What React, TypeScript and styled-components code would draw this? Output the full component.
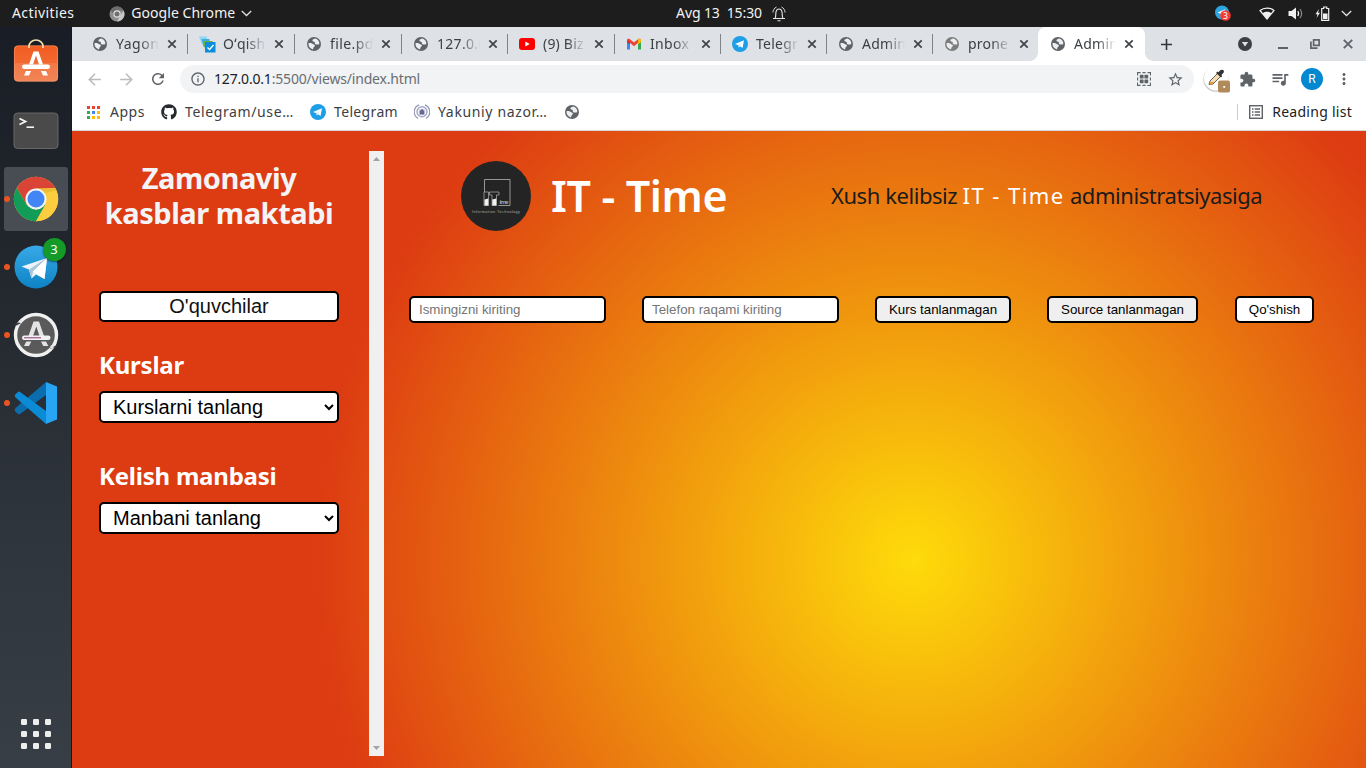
import React from 'react';
import styled, { createGlobalStyle } from 'styled-components';
import {
  MdArrowBack, MdArrowForward, MdRefresh, MdInfoOutline, MdStarBorder,
  MdExtension, MdQueueMusic, MdMoreVert, MdAdd,
} from 'react-icons/md';
import { FaGithub } from 'react-icons/fa';

const Global = createGlobalStyle`
  * { box-sizing: border-box; }
  body {
    margin: 0;
    overflow: hidden;
    font-family: 'Noto Sans', 'Open Sans', sans-serif;
    font-size: 14px;
  }
`;

const Desktop = styled.div`
  width: 1366px;
  height: 768px;
  display: flex;
  flex-direction: column;
`;

/* ---------- top panel ---------- */

const Panel = styled.header`
  height: 27px;
  flex: none;
  display: grid;
  grid-template-columns: 1fr auto 1fr;
  align-items: center;
  background: #1d1d1d;
  color: #f2f2f2;
  svg { display: block; flex: none; }
`;

const PanelLeft = styled.div`
  display: flex;
  align-items: center;
  padding-left: 12px;
`;

const PanelCenter = styled.div`
  display: flex;
  align-items: center;
  gap: 10px;
  padding-left: 96px;
`;

const PanelRight = styled.div`
  display: flex;
  align-items: center;
  justify-content: flex-end;
  padding-right: 14px;
`;

const PanelText = styled.span<{ $ls?: number }>`
  line-height: 26px;
  padding-bottom: 1px;
  white-space: pre;
  letter-spacing: ${(p) => p.$ls ?? 0}px;
`;

const AppMenu = styled.div`
  display: flex;
  align-items: center;
  gap: 6px;
  margin-left: 35px;
`;

const TrayItem = styled.span<{ $gap: number }>`
  margin-left: ${(p) => p.$gap}px;
`;

/* ---------- dock ---------- */

const Workspace = styled.div`
  flex: 1;
  min-height: 0;
  display: flex;
`;

const Dock = styled.nav`
  width: 72px;
  flex: none;
  display: flex;
  flex-direction: column;
  align-items: center;
  gap: 4px;
  padding: 4px 0 2px;
  border-right: 1px solid #16181c;
  background: linear-gradient(180deg, #191e26 0%, #22272e 32%, #2d333a 62%, #383e45 100%);
`;

const DockItem = styled.div<{ $active?: boolean; $running?: boolean; $last?: boolean; $raise?: number }>`
  position: relative;
  width: 64px;
  height: 64px;
  flex: none;
  display: flex;
  align-items: center;
  justify-content: center;
  border-radius: 3px;
  padding-bottom: ${(p) => p.$raise ?? 0}px;
  margin-top: ${(p) => (p.$last ? 'auto' : 0)};
  background: ${(p) => (p.$active ? '#484c53' : 'transparent')};
  &::before {
    content: '';
    display: ${(p) => (p.$running ? 'block' : 'none')};
    position: absolute;
    left: 0;
    top: 29px;
    width: 6px;
    height: 6px;
    border-radius: 50%;
    background: #e95420;
  }
`;

const DockBadge = styled.span`
  position: absolute;
  right: 2px;
  top: 3px;
  width: 23px;
  height: 23px;
  border-radius: 50%;
  background: #149a26;
  box-shadow: 0 1px 2px rgba(0, 0, 0, 0.5);
  color: #fff;
  font-size: 13px;
  line-height: 23px;
  text-align: center;
`;

/* ---------- browser chrome ---------- */

const Browser = styled.section`
  flex: 1;
  min-width: 0;
  display: flex;
  flex-direction: column;
  background: #fff;
  color: #3c4043;
`;

const TabStrip = styled.div`
  height: 34px;
  flex: none;
  display: flex;
  align-items: center;
  padding-left: 9px;
  background: #dee1e6;
`;

const Tab = styled.div<{ $w: number; $active?: boolean; $divider?: boolean }>`
  position: relative;
  width: ${(p) => p.$w}px;
  height: 34px;
  flex: none;
  display: flex;
  align-items: center;
  padding-left: ${(p) => (p.$active ? 12 : 11)}px;
  background: ${(p) => (p.$active ? '#fff' : 'transparent')};
  border-radius: 8px 8px 0 0;
  &::after {
    content: '';
    display: ${(p) => (p.$divider ? 'block' : 'none')};
    position: absolute;
    right: 0;
    top: 7px;
    width: 1px;
    height: 20px;
    background: #808387;
  }
  svg { display: block; flex: none; }
`;

const TabFoot = styled.i<{ $side: 'left' | 'right' }>`
  position: absolute;
  bottom: 0;
  ${(p) => p.$side}: -8px;
  width: 8px;
  height: 8px;
  background: radial-gradient(circle at ${(p) => (p.$side === 'left' ? '0 0' : '100% 0')}, transparent 7.5px, #fff 8px);
`;

const TabTitle = styled.span<{ $ls?: number; $w?: number }>`
  width: ${(p) => p.$w ?? 43}px;
  margin-left: 8px;
  margin-right: 8px;
  white-space: nowrap;
  line-height: 20px;
  letter-spacing: ${(p) => p.$ls ?? 0.25}px;
  mask-image: linear-gradient(90deg, #000 55%, transparent 100%);
`;

const FavBox = styled.span`
  width: 16px;
  height: 16px;
  flex: none;
  display: flex;
  align-items: center;
  justify-content: center;
`;

const NewTab = styled.div`
  margin-left: 12px;
  display: flex;
  color: #33363a;
`;

const WindowButtons = styled.div`
  margin-left: auto;
  padding-right: 13px;
  display: grid;
  grid-template-columns: 40px 32px 33px 10px;
  align-items: center;
  svg { display: block; }
`;

const Toolbar = styled.div`
  height: 36px;
  flex: none;
  display: flex;
  align-items: center;
  padding: 0 12px 0 13px;
  color: #5f6368;
  svg { display: block; flex: none; }
`;

const NavButtons = styled.div`
  display: flex;
  gap: 13px;
  margin-right: 13px;
`;

const Omnibox = styled.div`
  width: 1014px;
  height: 28px;
  display: flex;
  align-items: center;
  padding: 0 10px;
  border-radius: 14px;
  background: #f1f3f4;
`;

const Url = styled.span`
  margin-left: 8px;
  flex: 1;
  padding-bottom: 1px;
  letter-spacing: -0.18px;
  color: #6a6e73;
  b { font-weight: 400; color: #202124; }
`;

const OmniActions = styled.div`
  display: flex;
  align-items: center;
  gap: 16px;
`;

const Extensions = styled.div`
  flex: 1;
  display: grid;
  grid-template-columns: 36px 31px 31px 34px 18px;
  align-items: center;
  margin-left: 9px;
`;

const Avatar = styled.span`
  width: 22px;
  height: 22px;
  border-radius: 50%;
  background: #0288d1;
  color: #fff;
  font: 12px/22px Roboto, sans-serif;
  text-align: center;
`;

const Bookmarks = styled.div`
  height: 34px;
  flex: none;
  display: flex;
  align-items: center;
  padding: 0 14px 4px 15px;
  border-bottom: 1px solid #d7d8da;
  svg { display: block; flex: none; }
`;

const Bookmark = styled.div<{ $w: number; $ls: number; $gap?: number }>`
  width: ${(p) => p.$w}px;
  display: flex;
  align-items: center;
  gap: ${(p) => p.$gap ?? 8}px;
  white-space: nowrap;
  letter-spacing: ${(p) => p.$ls}px;
`;

const ReadingList = styled.div`
  margin-left: auto;
  display: flex;
  align-items: center;
  gap: 9px;
  padding-left: 11px;
  border-left: 1px solid #c9cbce;
  height: 16px;
  color: #202124;
  letter-spacing: 0.27px;
`;

/* ---------- web page ---------- */

const Page = styled.main`
  flex: 1;
  min-height: 0;
  display: flex;
  padding: 20px 0 12px;
  background: radial-gradient(circle at 65% 67.4%, #fedb0a 0px, #ee8d0e 290px, #dd3b12 598px);
`;

const Sidebar = styled.aside`
  width: 297px;
  flex: none;
  padding: 9px 30px 0 27px;
  display: flex;
  flex-direction: column;
`;

const SchoolName = styled.h2`
  margin: 0 0 61px;
  height: 70px;
  font-size: 29px;
  line-height: 35px;
  font-weight: 700;
  letter-spacing: -0.45px;
  text-align: center;
  color: #f4f4f6;
`;

const controlBox = `
  border: 2px solid #000;
  border-radius: 5px;
  background: #fff;
  color: #000;
  font-family: 'Liberation Sans', Arial, sans-serif;
`;

const StudentsButton = styled.button`
  ${controlBox}
  height: 31px;
  padding: 0;
  font-size: 20px;
  color: #111;
`;

const GroupTitle = styled.h3<{ $top: number }>`
  margin: ${(p) => p.$top}px 0 11px;
  height: 30px;
  font-size: 24px;
  line-height: 30px;
  font-weight: 700;
  letter-spacing: -0.22px;
  color: #fff;
`;

const Select = styled.select`
  ${controlBox}
  width: 240px;
  height: 32px;
  padding: 0 0 0 8px;
  font-size: 20px;
`;

const ScrollTrack = styled.div`
  width: 15px;
  flex: none;
  display: flex;
  flex-direction: column;
  justify-content: space-between;
  align-items: center;
  padding: 6px 0;
  background: #f0f0f0;
  svg { display: block; }
`;

const Content = styled.div`
  flex: 1;
  padding: 10px 52px 0 25px;
`;

const Banner = styled.div`
  height: 70px;
  display: flex;
  align-items: center;
  padding-left: 52px;
`;

const Brand = styled.h1`
  width: 280px;
  margin: 0 0 0 20px;
  font-size: 43px;
  font-weight: 600;
  line-height: 70px;
  letter-spacing: -0.36px;
  white-space: nowrap;
  color: #fff;
`;

const Welcome = styled.p`
  margin: 0;
  padding-bottom: 2px;
  font-size: 22px;
  letter-spacing: -0.44px;
  white-space: nowrap;
  color: #1b1b1b;
  span { color: #fff; letter-spacing: 1.45px; }
`;

const Form = styled.form`
  display: flex;
  gap: 36px;
  margin-top: 65px;
`;

const Field = styled.input`
  ${controlBox}
  width: 197px;
  height: 27px;
  padding: 0 8px;
  font-size: 13.333px;
  &::placeholder { color: #757575; }
`;

const FormButton = styled.button<{ $w: number; $gray?: boolean }>`
  ${controlBox}
  width: ${(p) => p.$w}px;
  height: 27px;
  padding: 0;
  font-size: 13.333px;
  background: ${(p) => (p.$gray ? '#efefef' : '#fff')};
  &:last-child { margin-left: 1px; }
`;

/* ---------- drawings ---------- */

const Globe = ({ color = '#5f6368' }: { color?: string }) => (
  <svg width="14" height="14" viewBox="0 0 14 14">
    <circle cx="7" cy="7" r="7" fill={color} />
    <path d="M8.6 1.6C7 2 5.2 2.6 5.4 3.7c.2 1 1.6.6 2.2 1.3.6.8-.2 1.6.8 2.2 1 .6 2.3.2 3.9.1A5.6 5.6 0 0 0 8.6 1.6z" fill="#eceef1" />
    <path d="M1.5 6.2c1.3-.2 3.2-.2 4 .6.7.7 2 .7 2.4 1.6.3.9-1 1.3-1.4 2.1-.3.7-.2 1.4-.5 1.9C3.3 11.7 1.3 9.3 1.5 6.2z" fill="#eceef1" />
  </svg>
);

const TelegramIcon = () => (
  <svg width="16" height="16" viewBox="0 0 16 16">
    <circle cx="8" cy="8" r="8" fill="#1d9ee6" />
    <path d="M3 7.9l9-3.6-1.5 7.7-2.4-1.7-1.3 1.3-.3-2.3z" fill="#fff" />
    <path d="M6.5 9.3L10.5 6 7.5 9.7l-.7 1.9z" fill="#b9dcf0" />
  </svg>
);

const YouTubeIcon = () => (
  <svg width="16" height="12" viewBox="0 0 16 12">
    <rect width="16" height="12" rx="3" fill="#f00" />
    <path d="M6.3 3.4v5.2L10.7 6z" fill="#fff" />
  </svg>
);

const GmailIcon = () => (
  <svg width="16" height="12" viewBox="0 0 16 12">
    <path d="M1 2v9.5h3V5z" fill="#4285f4" />
    <path d="M12 5v6.5h3V2z" fill="#34a853" />
    <path d="M1 2.2V4l3 2.3V2.5z" fill="#c5221f" />
    <path d="M1 2.2C1 .7 2.6.3 3.6 1L8 4.4 12.4 1C13.4.3 15 .7 15 2.2L8 8.2z" fill="#ea4335" />
    <path d="M12 3v3.3L15 4V2.2C15 .8 13.4.3 12.4 1z" fill="#fbbc04" />
  </svg>
);

const ChecklistIcon = () => (
  <svg width="18" height="18" viewBox="0 0 18 18">
    <path d="M1 1.500h8v3h-2v4H3.500z" fill="#8fd6f2" />
    <path d="M3.500 4h8v3h-2v5H5.500z" fill="#3bafda" />
    <path d="M5.500 6h9v3h-4v5H7z" fill="#6fae3c" />
    <rect x="7" y="7" width="10.500" height="10.500" fill="#0a8ddb" />
    <path d="M9.500 12.500l2 2 4-4.500" stroke="#fff" strokeWidth="1.400" fill="none" />
  </svg>
);

const TabClose = () => (
  <svg width="10" height="10" viewBox="0 0 10 10">
    <path d="M1.3 1.3l7.4 7.4M8.7 1.3L1.3 8.7" stroke="#3f4246" strokeWidth="1.7" />
  </svg>
);

const ChromeGray = () => (
  <svg width="16" height="16" viewBox="0 0 16 16">
    <circle cx="8" cy="8" r="7.5" fill="#8e8e8e" />
    <path d="M8 .5A7.5 7.5 0 0 0 1.500 4.300L5 9l3-4.500h6.600A7.500 7.500 0 0 0 8 .5z" fill="#6d6d6d" />
    <path d="M8 15.500l3.400-6 3.200-5a7.500 7.500 0 0 1-6.600 11z" fill="#c8c8c8" />
    <circle cx="8" cy="8" r="3.700" fill="#dedede" />
    <circle cx="8" cy="8" r="2.500" fill="#6f6f6f" />
  </svg>
);

const Chevron = () => (
  <svg width="11" height="7" viewBox="0 0 11 7">
    <path d="M.8 1l4.7 4.500L10.200 1" stroke="#e0e0e0" strokeWidth="1.300" fill="none" />
  </svg>
);

const Bell = () => (
  <svg width="14" height="16" viewBox="0 0 14 16" fill="none" stroke="#e8e8e8" strokeWidth="1.100">
    <path d="M1 12.500h12M3 12.500c1-1.500.7-4 .9-6C4.200 4.200 5.300 3 7 3s2.800 1.200 3.100 3.500c.2 2-.1 4.500.9 6M5.500 14.800h3" />
    <path d="M1 6.500C1 4 2.300 2 4.500 1M13 6.500C13 4 11.700 2 9.500 1" strokeWidth=".9" />
  </svg>
);

const TrayTelegram = () => (
  <svg width="16" height="17" viewBox="0 0 16 17">
    <circle cx="7" cy="7.500" r="7" fill="#2ca5e0" />
    <path d="M2.500 7.500l8-3.200-1.500 6z" fill="#fff" />
    <circle cx="10.500" cy="10.500" r="5.300" fill="#f23c34" />
    <text x="10.500" y="13.500" fontSize="8.500" textAnchor="middle" fill="#fff">3</text>
  </svg>
);

const Wifi = () => (
  <svg width="16" height="13" viewBox="0 0 16 13">
    <path d="M1 3.500C5 .2 11 .2 15 3.500L8 12z" fill="none" stroke="#f0f0f0" strokeWidth="1.200" strokeLinejoin="round" />
    <path d="M3.700 6.200c2.500-1.800 6.100-1.800 8.600 0L8 12z" fill="#f0f0f0" />
  </svg>
);

const Speaker = () => (
  <svg width="15" height="13" viewBox="0 0 15 13">
    <path d="M.5 4h3L8 .5v12L3.500 9h-3z" fill="#f0f0f0" />
    <path d="M9.800 4c1 1.500 1 3.500 0 5" stroke="#f0f0f0" strokeWidth="1.200" fill="none" />
    <path d="M12 2c2 2.700 2 6.300 0 9" stroke="#888" strokeWidth="1.200" fill="none" />
  </svg>
);

const Battery = () => (
  <svg width="15" height="15" viewBox="0 0 15 15">
    <path d="M4 3L.5 8.200h2L1.500 12 5 6.800H3z" fill="#f0f0f0" />
    <path d="M6.700 2.500h2V1h3v1.500h2v11.800h-7z" fill="none" stroke="#f0f0f0" strokeWidth="1.200" />
    <rect x="8" y="7.500" width="4.500" height="5.500" fill="#f0f0f0" />
  </svg>
);

const SoftwareIcon = () => (
  <svg width="46" height="46" viewBox="0 0 46 46">
    <defs>
      <linearGradient id="bag" x1="0" y1="0" x2="0" y2="1">
        <stop offset="0" stopColor="#f25c20" /><stop offset="1" stopColor="#f07744" />
      </linearGradient>
    </defs>
    <rect x="1" y="8.500" width="44" height="36" rx="4" fill="url(#bag)" />
    <rect x="1" y="26" width="44" height="18.500" rx="3" fill="#fff" opacity=".1" />
    <rect x="1.400" y="8.900" width="43.200" height="35.200" rx="4" fill="none" stroke="#f8a17c" strokeWidth=".7" opacity=".7" />
    <path d="M16 11V9.500a7 6.500 0 0 1 14 0V11" fill="none" stroke="#f6dfa8" strokeWidth="1.700" />
    <path d="M20.500 14.500h5l4.500 13h-4L23 18.500 20 27.500h-4z" fill="#fff" />
    <rect x="9" y="27.500" width="28" height="4.600" rx="2.300" fill="#fff" />
    <path d="M13 34h5l-2 4.500h-5zM28 34h5l2 4.500h-5z" fill="#fff" />
  </svg>
);

const TerminalIcon = () => (
  <svg width="46" height="38" viewBox="0 0 46 38">
    <rect x="1" y="1" width="44" height="35.500" rx="3.500" fill="#4a4a4a" stroke="#6c6c6c" strokeWidth=".9" />
    <path d="M6.500 6.500l6 3-6 3" stroke="#f5f5f5" strokeWidth="1.800" fill="none" />
    <path d="M13.500 15.200h7.500" stroke="#f5f5f5" strokeWidth="1.600" />
  </svg>
);

const ChromeIcon = () => (
  <svg width="46" height="46" viewBox="0 0 46 46">
    <circle cx="23" cy="23" r="22.200" fill="#fcc934" />
    <path d="M3.800 11.900A22.200 22.200 0 0 1 42.200 11.900L23 12.500 13.400 28.500z" fill="#d94437" />
    <path d="M3.800 11.900A22.200 22.200 0 0 0 23 45.200L32.500 28.500 23 34 13.400 28.500z" fill="#119c58" />
    <path d="M42.200 11.900A22.200 22.200 0 0 1 23 45.200L32.600 28.500 32 13z" fill="#fdcd3f" />
    <path d="M23 12.500h19.500a22 22 0 0 1 .8 2L31 17z" fill="#e2b22e" opacity=".6" />
    <circle cx="23" cy="23" r="10.600" fill="#f1f3f4" />
    <circle cx="23" cy="23" r="8.500" fill="#4285f4" />
  </svg>
);

const DockTelegram = () => (
  <svg width="44" height="44" viewBox="0 0 44 44">
    <defs>
      <linearGradient id="tg" x1="0" y1="0" x2="0" y2="1">
        <stop offset="0" stopColor="#38a9e8" /><stop offset="1" stopColor="#0d83c4" />
      </linearGradient>
    </defs>
    <circle cx="22" cy="22" r="21.500" fill="url(#tg)" />
    <path d="M7.500 21.500L33 13 30.500 34 22 29.500 17.500 33.500 15 24.500z" fill="#e9f2f8" />
    <path d="M15 24.500L33 13 19 26.500 17.500 33.500z" fill="#a9c6d8" />
    <path d="M19 26.500L33 13 30.500 34z" fill="#fff" />
  </svg>
);

const UpdaterIcon = () => (
  <svg width="46" height="46" viewBox="0 0 46 46">
    <circle cx="23" cy="23" r="20.500" fill="#5a5a5a" stroke="#f0f0f0" strokeWidth="3.400" />
    <path d="M1.500 13.500l6-3M37.500 36l6-1.500" stroke="#3b3f45" strokeWidth="1.800" />
    <circle cx="7.500" cy="9.500" r="1.800" fill="#e4e4e4" />
    <circle cx="39" cy="35" r="1.800" fill="#e4e4e4" />
    <path d="M20.500 9.500h5.500l5 14.500h-4.500l-3.200-9.500L20 24h-4.500z" fill="#e4e4e4" />
    <rect x="9" y="23.500" width="28.500" height="4.400" rx="2.200" fill="#f2f2f2" />
    <path d="M11 25.800h17" stroke="#8b3a78" strokeWidth="1" />
    <path d="M13.300 29.500h5L16 34h-5zM28 29.500h5l2.300 4.500h-5z" fill="#e4e4e4" />
  </svg>
);

const CodeIcon = () => (
  <svg width="44" height="44" viewBox="0 0 44 44">
    <path d="M1.500 27L32 1v13L6 33q-1 .8-2 0L1.200 30.500q-1.200-1.500.3-3.500z" fill="#0b6cae" />
    <path d="M1.500 16.500q-1.500-1.500-.3-3L4 11q1-.8 2 0L32 30v13z" fill="#0b8ad6" />
    <path d="M32 1L43 5.500v33L32 43z" fill="#28a5f3" />
  </svg>
);

const GridIcon = () => (
  <svg width="30" height="30" viewBox="0 0 30 30" fill="#eeeeec">
    {[0, 12, 24].map((y) => [0, 12, 24].map((x) => (
      <rect key={`${x}-${y}`} x={x} y={y} width="6" height="6" rx="1.200" />
    )))}
  </svg>
);

const AppsIcon = () => {
  const colors = ['#ea4335', '#ea4335', '#ea4335', '#34a853', '#4285f4', '#fbbc04', '#34a853', '#fbbc04', '#fbbc04'];
  return (
    <svg width="14" height="14" viewBox="0 0 14 14">
      {colors.map((c, i) => (
        <rect key={i} x={(i % 3) * 5} y={Math.floor(i / 3) * 5 + 1} width="3" height="3" fill={c} />
      ))}
    </svg>
  );
};

const SealIcon = () => (
  <svg width="16" height="16" viewBox="0 0 16 16" fill="none">
    <path d="M5 .9a7.600 7.600 0 0 0-1 13.600M11 .9a7.600 7.600 0 0 1 1 13.600" stroke="#8f93b6" strokeWidth="1.200" />
    <circle cx="8" cy="7.800" r="5" stroke="#a5a8c5" strokeWidth="1.400" />
    <circle cx="8" cy="7.800" r="3.400" fill="#d5d7e6" />
    <path d="M5.700 10.500V7L8 5l2.300 2v3.500z" fill="#66698f" />
  </svg>
);

const QrIcon = () => (
  <svg width="14" height="14" viewBox="0 0 14 14" fill="#5f6368">
    <path d="M.6 3.500V.6h3M5.500.6h3M10.500.6h3v3M13.400 5.500v3M13.400 10.500v3h-3M8.500 13.400h-3M3.500 13.400h-3v-3M.6 8.500v-3" stroke="#5f6368" strokeWidth="1.100" fill="none" />
    <rect x="2.800" y="2.800" width="3.800" height="3.800" rx=".6" /><rect x="7.400" y="2.800" width="3.800" height="3.800" rx=".6" />
    <rect x="2.800" y="7.400" width="3.800" height="3.800" rx=".6" /><rect x="7.400" y="7.400" width="3.800" height="3.800" rx=".6" />
  </svg>
);

const PickerIcon = () => (
  <svg width="28" height="28" viewBox="0 0 28 28">
    <circle cx="13" cy="14.600" r="12.700" fill="#000" opacity=".1" />
    <circle cx="13" cy="14" r="12.600" fill="#000" opacity=".13" />
    <circle cx="13.300" cy="13.200" r="12.300" fill="#fff" />
    <path d="M6 19.500l1-3.500 7.500-7.500 3 3L10 19z" fill="#f6dcae" stroke="#555" strokeWidth=".9" />
    <path d="M7.500 17h4L9.500 19l-2.500.8z" fill="#e39a2c" />
    <path d="M13 8l1.500-1.500 1 .8L17 5.500c1.200-1.300 3.400-1 3.800.3.400 1-.1 2-.9 2.700L18.300 10l1 1L18 12.500z" fill="#333" />
    <rect x="15" y="15.500" width="12" height="12" rx="2" fill="#b08a58" />
    <rect x="20.300" y="21" width="1.800" height="1.800" fill="#fff" />
  </svg>
);

const TabSearch = () => (
  <svg width="14" height="14" viewBox="0 0 14 14">
    <circle cx="7" cy="7" r="7" fill="#3c4043" />
    <path d="M3.800 5h6.400L7 9.600z" fill="#dee1e6" />
  </svg>
);

const Minimize = () => (
  <svg width="10" height="12" viewBox="0 0 10 12"><path d="M0 10h10" stroke="#5f6368" strokeWidth="2" /></svg>
);

const Restore = () => (
  <svg width="10" height="10" viewBox="0 0 10 10" fill="none" stroke="#5f6368" strokeWidth="1.700">
    <rect x="3.600" y=".9" width="5.500" height="5.500" />
    <path d="M.9 2.500v6.600h6.600" />
  </svg>
);

const WindowClose = () => (
  <svg width="10" height="10" viewBox="0 0 10 10"><path d="M.8.8l8.400 8.400M9.200.8L.8 9.200" stroke="#5f6368" strokeWidth="1.900" /></svg>
);

const ReadingIcon = () => (
  <svg width="14" height="14" viewBox="0 0 14 14" fill="none" stroke="#5f6368">
    <rect x=".7" y=".7" width="12.600" height="12.600" strokeWidth="1.400" />
    <path d="M3 4h1.500M3 7h1.500M3 10h1.500M5.700 4H11M5.700 7H11M5.700 10H11" strokeWidth="1.300" />
  </svg>
);

const LogoMark = () => (
  <svg width="70" height="70" viewBox="0 0 70 70">
    <circle cx="35" cy="35" r="35" fill="#242424" />
    <path d="M23.500 31V18.500H49v26H37.500" fill="none" stroke="#a5a5a5" strokeWidth=".9" />
    <path d="M23 31h4.500v13.500H23zM28.500 31H38v3h-2.500v10.500h-4.500V34h-2.500z" fill="#242424" stroke="#b5b5b5" strokeWidth=".7" />
    <path d="M23.500 38.500l3.800-1v7h-3.800zM31.300 38.500l4-1v7h-4z" fill="#f0f0f0" />
    <text x="38.500" y="43" fontFamily="Noto Sans" fontSize="6" fontWeight="600" fill="#b5b5b5" textLength="9">ime</text>
    <text x="11" y="51.500" fontFamily="Liberation Sans" fontSize="3.800" fill="#a8a8a8" textLength="48">Information Technology</text>
  </svg>
);

const Arrow = ({ down }: { down?: boolean }) => (
  <svg width="7" height="4" viewBox="0 0 7 4">
    <path d={down ? 'M0 0h7L3.5 4z' : 'M0 4h7L3.5 0z'} fill="#a3a3a3" />
  </svg>
);

const tabs: { title: string; icon: React.ReactNode; w: number; ls?: number }[] = [
  { title: 'Yagon', icon: <Globe />, w: 107, ls: 0.5 },
  { title: 'Oʻqish', icon: <ChecklistIcon />, w: 107 },
  { title: 'file.pd', icon: <Globe />, w: 107, ls: 0.4 },
  { title: '127.0.0', icon: <Globe />, w: 106, ls: 0.3 },
  { title: '(9) Biz', icon: <YouTubeIcon />, w: 107, ls: 0.2 },
  { title: 'Inbox', icon: <GmailIcon />, w: 106, ls: 0.3 },
  { title: 'Telegr', icon: <TelegramIcon />, w: 106 },
  { title: 'Admin', icon: <Globe />, w: 106 },
  { title: 'prone', icon: <Globe color="#7d7d7d" />, w: 105, ls: 0.2 },
];

export default function App() {
  return (
    <Desktop>
      <Global />
      <Panel>
        <PanelLeft>
          <PanelText $ls={0.4}>Activities</PanelText>
          <AppMenu>
            <ChromeGray />
            <PanelText $ls={0.04}>Google Chrome</PanelText>
            <Chevron />
          </AppMenu>
        </PanelLeft>
        <PanelCenter>
          <PanelText $ls={-0.12}>Avg 13  15:30</PanelText>
          <Bell />
        </PanelCenter>
        <PanelRight>
          <TrayItem $gap={0}><TrayTelegram /></TrayItem>
          <TrayItem $gap={28}><Wifi /></TrayItem>
          <TrayItem $gap={13}><Speaker /></TrayItem>
          <TrayItem $gap={12}><Battery /></TrayItem>
          <TrayItem $gap={11}><Chevron /></TrayItem>
        </PanelRight>
      </Panel>
      <Workspace>
        <Dock>
          <DockItem $raise={6}><SoftwareIcon /></DockItem>
          <DockItem><TerminalIcon /></DockItem>
          <DockItem $active $running><ChromeIcon /></DockItem>
          <DockItem $running><DockTelegram /><DockBadge>3</DockBadge></DockItem>
          <DockItem $running><UpdaterIcon /></DockItem>
          <DockItem $running><CodeIcon /></DockItem>
          <DockItem $last><GridIcon /></DockItem>
        </Dock>
        <Browser>
          <TabStrip>
            {tabs.map((t, i) => (
              <Tab key={i} $w={t.w} $divider={i < tabs.length - 1}>
                <FavBox>{t.icon}</FavBox>
                <TabTitle $ls={t.ls}>{t.title}</TabTitle>
                <TabClose />
              </Tab>
            ))}
            <Tab $w={107} $active>
              <TabFoot $side="left" />
              <FavBox><Globe /></FavBox>
              <TabTitle $w={42}>Admin</TabTitle>
              <TabClose />
              <TabFoot $side="right" />
            </Tab>
            <NewTab><MdAdd size={19} /></NewTab>
            <WindowButtons>
              <TabSearch />
              <Minimize />
              <Restore />
              <WindowClose />
            </WindowButtons>
          </TabStrip>
          <Toolbar>
            <NavButtons>
              <MdArrowBack size={19} color="#babcbe" />
              <MdArrowForward size={19} color="#babcbe" />
              <MdRefresh size={18} />
            </NavButtons>
            <Omnibox>
              <MdInfoOutline size={16} />
              <Url><b>127.0.0.1</b>:5500/views/index.html</Url>
              <OmniActions>
                <QrIcon />
                <MdStarBorder size={17} />
              </OmniActions>
            </Omnibox>
            <Extensions>
              <PickerIcon />
              <MdExtension size={17} />
              <MdQueueMusic size={20} />
              <Avatar>R</Avatar>
              <MdMoreVert size={18} />
            </Extensions>
          </Toolbar>
          <Bookmarks>
            <Bookmark $w={74} $ls={0.5} $gap={9}><AppsIcon />Apps</Bookmark>
            <Bookmark $w={149} $ls={0.62}><FaGithub size={16} color="#24292e" />Telegram/use…</Bookmark>
            <Bookmark $w={104} $ls={0.35}><TelegramIcon />Telegram</Bookmark>
            <Bookmark $w={151} $ls={0.65}><SealIcon />Yakuniy nazor…</Bookmark>
            <Globe />
            <ReadingList><ReadingIcon />Reading list</ReadingList>
          </Bookmarks>
          <Page>
            <Sidebar>
              <SchoolName>Zamonaviy kasblar maktabi</SchoolName>
              <StudentsButton>O'quvchilar</StudentsButton>
              <GroupTitle $top={28}>Kurslar</GroupTitle>
              <Select><option>Kurslarni tanlang</option></Select>
              <GroupTitle $top={38}>Kelish manbasi</GroupTitle>
              <Select><option>Manbani tanlang</option></Select>
            </Sidebar>
            <ScrollTrack><Arrow /><Arrow down /></ScrollTrack>
            <Content>
              <Banner>
                <LogoMark />
                <Brand>IT - Time</Brand>
                <Welcome>Xush kelibsiz <span>IT - Time</span> administratsiyasiga</Welcome>
              </Banner>
              <Form>
                <Field placeholder="Ismingizni kiriting" />
                <Field placeholder="Telefon raqami kiriting" />
                <FormButton type="button" $w={136} $gray>Kurs tanlanmagan</FormButton>
                <FormButton type="button" $w={151} $gray>Source tanlanmagan</FormButton>
                <FormButton type="button" $w={79}>Qo'shish</FormButton>
              </Form>
            </Content>
          </Page>
        </Browser>
      </Workspace>
    </Desktop>
  );
}
